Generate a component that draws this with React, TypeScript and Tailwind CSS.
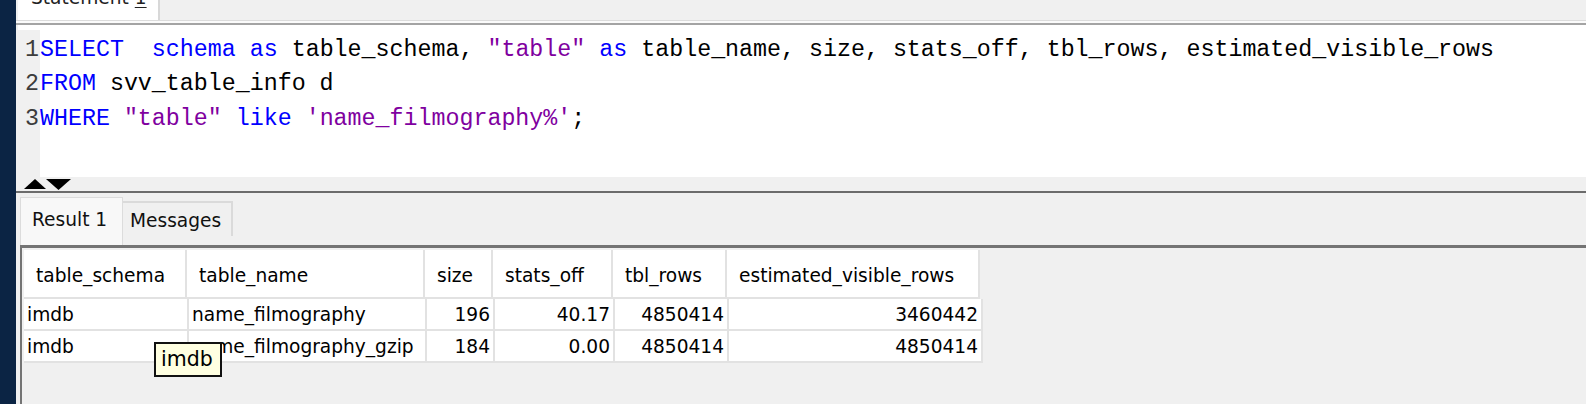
import React from "react";

const KW = "text-[#0000ff]";
const STR = "text-[#8000a0]";
const ID = "text-[#000000]";

type Tok = [string, string];

const LINES: Tok[][] = [
  [
    ["SELECT", KW],
    ["  ", ID],
    ["schema", KW],
    [" ", ID],
    ["as", KW],
    [" table_schema, ", ID],
    ['"table"', STR],
    [" ", ID],
    ["as", KW],
    [" table_name, size, stats_off, tbl_rows, estimated_visible_rows", ID],
  ],
  [
    ["FROM", KW],
    [" svv_table_info d", ID],
  ],
  [
    ["WHERE", KW],
    [" ", ID],
    ['"table"', STR],
    [" ", ID],
    ["like", KW],
    [" ", ID],
    ["'name_filmography%'", STR],
    [";", ID],
  ],
];

const HEAD_W = [163, 238, 68, 120, 114, 253];
const ROW_W = [165, 238, 68, 120, 114, 254];
const HEADERS = ["table_schema", "table_name", "size", "stats_off", "tbl_rows", "estimated_visible_rows"];
const ROWS = [
  ["imdb", "name_filmography", "196", "40.17", "4850414", "3460442"],
  ["imdb", "name_filmography_gzip", "184", "0.00", "4850414", "4850414"],
];
const RIGHT = [false, false, true, true, true, true];

const ui = "font-['DejaVu_Sans',sans-serif]";

export default function App() {
  return (
    <div className="relative flex h-[404px] w-[1586px] overflow-hidden bg-[#f0f0f0]">
      {/* desktop edge */}
      <div className="w-[16px] shrink-0 bg-[#0b2444]" />

      <div className="flex min-w-0 flex-1 flex-col">
        {/* statement tab strip */}
        <div className="flex h-[20px] pl-[2px]">
          <div className={`h-full w-[142px] overflow-hidden border-r-2 border-[#d8d8d8] bg-white pl-[13px] ${ui}`}>
            <div className="mt-[-13px] whitespace-pre text-[18.6px] leading-[22px] text-[#222]">
              Statement <span className="underline underline-offset-[3px]">1</span>
            </div>
          </div>
        </div>
        <div className="h-[1px] bg-[#dcdcdc]" />
        <div className="h-[2px] bg-[#fbfbfb]" />
        <div className="h-[2px] bg-[#a4a4a4]" />

        {/* editor */}
        <div className="h-[152px] pl-[2px]">
          <div className="flex h-full flex-col bg-white">
            <div className="h-[5px] shrink-0" />
            <div className="flex min-h-0 flex-1 font-['Liberation_Mono',monospace] text-[23.3px] leading-[34.4px]">
              <div className="w-[22px] shrink-0 bg-[#f0f0f0] pt-[3px] text-right text-[#3c3c3c]">
                {LINES.map((_, i) => (
                  <div key={i} className="pr-[1px]">{i + 1}</div>
                ))}
              </div>
              <div className="flex-1 whitespace-pre pt-[3px]">
                {LINES.map((line, i) => (
                  <div key={i}>
                    {line.map(([t, c], j) => (
                      <span key={j} className={c}>{t}</span>
                    ))}
                  </div>
                ))}
              </div>
            </div>
          </div>
        </div>

        {/* splitter */}
        <div className="flex h-[14px] items-center pl-[8px]">
          <svg width="48" height="12" viewBox="0 0 48 12">
            <polygon points="0,11 11,1 22,11" fill="#000" />
            <polygon points="22,1 47,1 34.5,12" fill="#000" />
          </svg>
        </div>
        <div className="h-[2px] bg-[#6c6c6c]" />

        {/* result tabs */}
        <div className={`flex h-[52px] items-start pl-[4px] pt-[4px] ${ui}`}>
          <div className="flex h-[48px] w-[103px] items-start border-x border-t border-[#dcdcdc] bg-[#f8f8f8] pl-[11px] pt-[8px] text-[18.6px] text-[#111]">
            Result 1
          </div>
          <div className="mt-[4px] flex h-[35px] w-[110px] items-center border-r-2 border-t-2 border-[#dadada] pl-[7px] pt-[3px] text-[18.6px] text-[#111]">
            Messages
          </div>
        </div>

        {/* result grid panel */}
        <div className="ml-[4px] flex-1 border-l-2 border-t-[3px] border-[#747474] pl-[2px] pt-[2px]">
          <div className={`text-[18.6px] text-black ${ui}`}>
            <div className="flex h-[49px]">
              {HEADERS.map((h, i) => (
                <div
                  key={h}
                  style={{ width: HEAD_W[i] }}
                  className="flex items-center border-b-2 border-r-2 border-[#e2e2e2] bg-white pl-[12px] pt-[5px]"
                >
                  {h}
                </div>
              ))}
            </div>
            {ROWS.map((r, ri) => (
              <div key={ri} className="flex h-[32px]">
                {r.map((v, i) => (
                  <div
                    key={i}
                    style={{ width: ROW_W[i] }}
                    className={`flex items-center border-b-2 border-r-2 border-[#e2e2e2] bg-white pt-[1px] ${
                      RIGHT[i] ? "justify-end pr-[3px]" : "pl-[3px]"
                    }`}
                  >
                    {v}
                  </div>
                ))}
              </div>
            ))}
          </div>
        </div>
      </div>

      {/* hover tooltip */}
      <div
        className={`absolute left-[154px] top-[342px] flex h-[35px] w-[68px] items-center border-2 border-[#111] bg-[#ffffe1] pl-[5px] text-[20.5px] text-black ${ui}`}
      >
        imdb
      </div>
    </div>
  );
}
